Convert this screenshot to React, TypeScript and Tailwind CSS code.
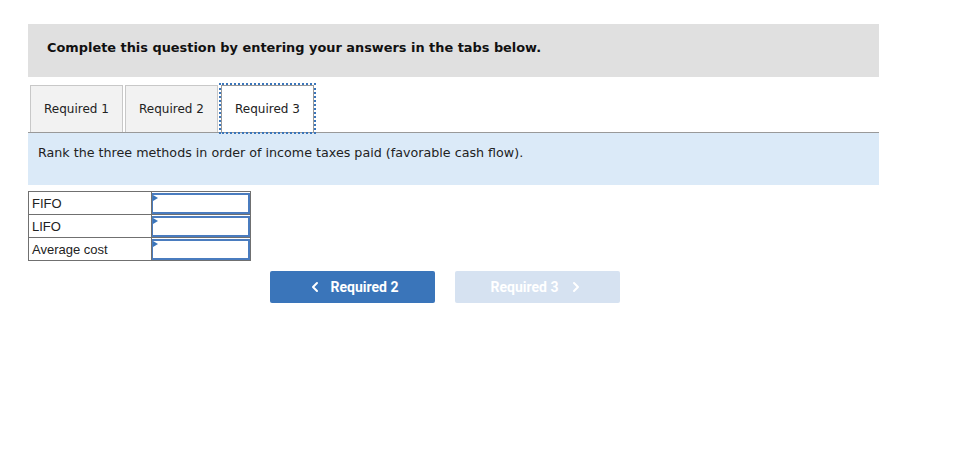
import { ChevronLeft, ChevronRight } from 'lucide-react';

const rows = ['FIFO', 'LIFO', 'Average cost'];

function Tab({ label, active }: { label: string; active?: boolean }) {
  if (active) {
    return (
      <div className="h-[49px] -mb-px outline-2 outline-dotted outline-[#3a75ba] -outline-offset-1 p-px">
        <div className="h-full w-[93px] bg-white border border-[#999] border-b-0 flex items-center justify-center text-[12px] text-[#222]">
          {label}
        </div>
      </div>
    );
  }
  return (
    <div className="h-[47px] w-[93px] mt-px bg-[#f2f2f2] border border-[#c8c8c8] border-b-0 flex items-center justify-center text-[12px] text-[#222]">
      {label}
    </div>
  );
}

export default function App() {
  return (
    <div className="min-h-screen bg-white pt-[24px] pl-[28px]" style={{ fontFamily: 'Verdana, "DejaVu Sans", sans-serif' }}>
      <div className="w-[851px]">
        <div className="h-[53px] bg-[#e0e0e0] pl-[19px] pt-[14px] text-[12.9px] font-bold text-[#111]">
          Complete this question by entering your answers in the tabs below.
        </div>

        <div className="mt-[7px] flex items-end gap-[2px] pl-[2px] border-b border-[#999]">
          <Tab label="Required 1" />
          <Tab label="Required 2" />
          <Tab label="Required 3" active />
        </div>

        <div className="h-[52px] bg-[#dbeaf8] pl-[10px] pt-[10px] text-[12.7px] text-[#222]">
          Rank the three methods in order of income taxes paid (favorable cash flow).
        </div>
      </div>

      <table className="mt-[6px] border-collapse text-[13px] text-[#222]" style={{ fontFamily: '"Liberation Sans", Arial, sans-serif' }}>
        <tbody>
          {rows.map((r) => (
            <tr key={r} className="h-[23px]">
              <td className="w-[123px] border border-[#707070] pl-[3px] py-0 leading-none">{r}</td>
              <td className="w-[99px] border border-[#707070] p-0">
                <div className="relative h-[21px] border-2 border-[#4a7cbf] border-l-[1px] bg-white">
                  <span className="absolute left-0 top-0 w-0 h-0 border-y-[3px] border-y-transparent border-l-[5px] border-l-[#3a75ba]" />
                </div>
              </td>
            </tr>
          ))}
        </tbody>
      </table>

      <div className="mt-[10px] flex gap-[20px] pl-[242px]" style={{ fontFamily: 'Roboto, "Liberation Sans", sans-serif' }}>
        <button className="w-[165px] h-[32px] rounded-[2px] bg-[#3a75ba] text-white text-[14px] font-bold flex items-center justify-center gap-[8px]">
          <ChevronLeft size={16} strokeWidth={3} />
          Required 2
        </button>
        <button className="w-[165px] h-[32px] rounded-[2px] bg-[#d6e2f1] text-white text-[14px] font-bold flex items-center justify-center gap-[10px] cursor-not-allowed">
          Required 3
          <ChevronRight size={16} strokeWidth={3} />
        </button>
      </div>
    </div>
  );
}
